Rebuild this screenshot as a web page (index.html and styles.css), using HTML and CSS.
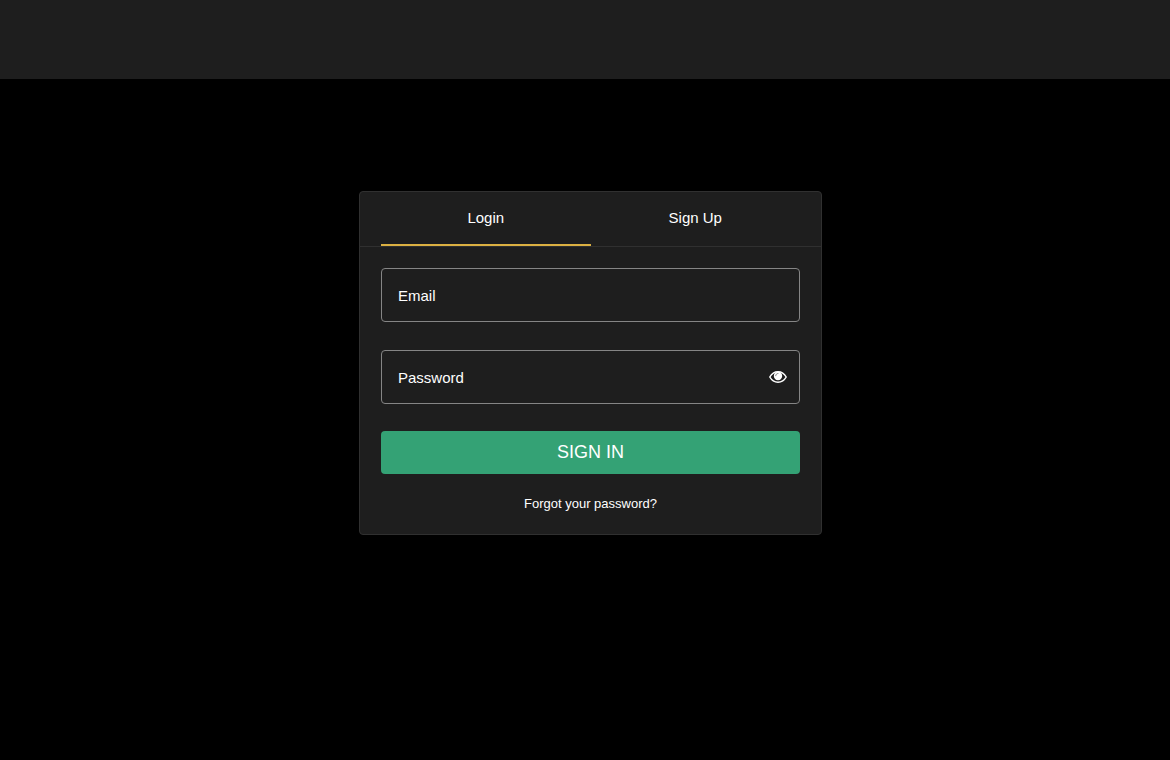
FILE: index.html
```html
<!DOCTYPE html>
<html lang="en">
<head>
<meta charset="utf-8">
<meta name="viewport" content="width=device-width, initial-scale=1">
<title>Login</title>
<link rel="stylesheet" href="styles.css">
</head>
<body>
<header class="site-header"></header>
<main class="page">
  <section class="card">
    <div class="tabs" role="tablist">
      <button class="tab tab-active" type="button" role="tab" aria-selected="true">Login</button>
      <button class="tab" type="button" role="tab" aria-selected="false">Sign Up</button>
    </div>
    <form class="form">
      <div class="field">
        <input class="input" type="email" aria-label="Email" placeholder="Email">
      </div>
      <div class="field">
        <input class="input" type="password" aria-label="Password" placeholder="Password">
        <button class="reveal" type="button" aria-label="Show password">
          <svg class="eye" viewBox="0 0 18 12" aria-hidden="true">
            <path fill="none" stroke="#fff" stroke-width="1.500" stroke-linejoin="round" d="M.8 6C2.700 2.600 5.500.8 9 .8S15.300 2.600 17.200 6C15.300 9.400 12.500 11.200 9 11.200S2.700 9.400.8 6Z"/>
            <circle fill="#fff" cx="9" cy="5" r="4.200"/>
            <path fill="none" stroke="#666" stroke-width=".8" stroke-linecap="round" d="M6.700 4.700C6.700 3.400 7.700 2.500 9 2.500"/>
          </svg>
        </button>
      </div>
      <button class="submit" type="submit">SIGN IN</button>
      <a class="forgot" href="#">Forgot your password?</a>
    </form>
  </section>
</main>
</body>
</html>
```

FILE: styles.css
```css
* {
  box-sizing: border-box;
}

body {
  margin: 0;
  background: #000;
  color: #fff;
  font-family: "Liberation Sans", Arial, sans-serif;
  font-size: 15px;
}

button,
input {
  font: inherit;
  color: inherit;
}

button {
  cursor: pointer;
}

.site-header {
  height: 79px;
  background: #1e1e1e;
}

.page {
  display: flex;
  justify-content: center;
  padding: 112px 0 48px 11px;
}

.card {
  width: 100%;
  max-width: 463px;
  background: #1e1e1e;
  border: 1px solid #303030;
  border-radius: 4px;
}

.tabs {
  display: flex;
  padding: 0 21px;
  border-bottom: 1px solid #303030;
}

.tab {
  flex: 1;
  padding: 16px 0;
  line-height: 20px;
  background: none;
  border: 0;
  border-bottom: 2px solid transparent;
}

.tab-active {
  border-bottom-color: #dbb042;
}

.form {
  display: flex;
  flex-direction: column;
  padding: 21px;
}

.field {
  display: flex;
  position: relative;
}

.field + .field {
  margin-top: 28px;
}

.input {
  width: 100%;
  height: 54px;
  padding: 0 48px 0 16px;
  background: transparent;
  border: 1px solid #858585;
  border-radius: 4px;
}

.input::placeholder {
  color: #fff;
  opacity: 1;
}

.reveal {
  position: absolute;
  top: 0;
  right: 0;
  bottom: 0;
  width: 44px;
  display: flex;
  align-items: center;
  justify-content: center;
  padding: 0;
  background: none;
  border: 0;
}

.eye {
  width: 18px;
  height: 12px;
}

.submit {
  height: 43px;
  margin-top: 27px;
  padding: 0;
  border: 0;
  border-radius: 4px;
  background: #34a275;
  font-size: 18px;
}

.forgot {
  align-self: center;
  margin-top: 21px;
  color: #fff;
  font-size: 13px;
  line-height: 18px;
  text-decoration: none;
}
```
